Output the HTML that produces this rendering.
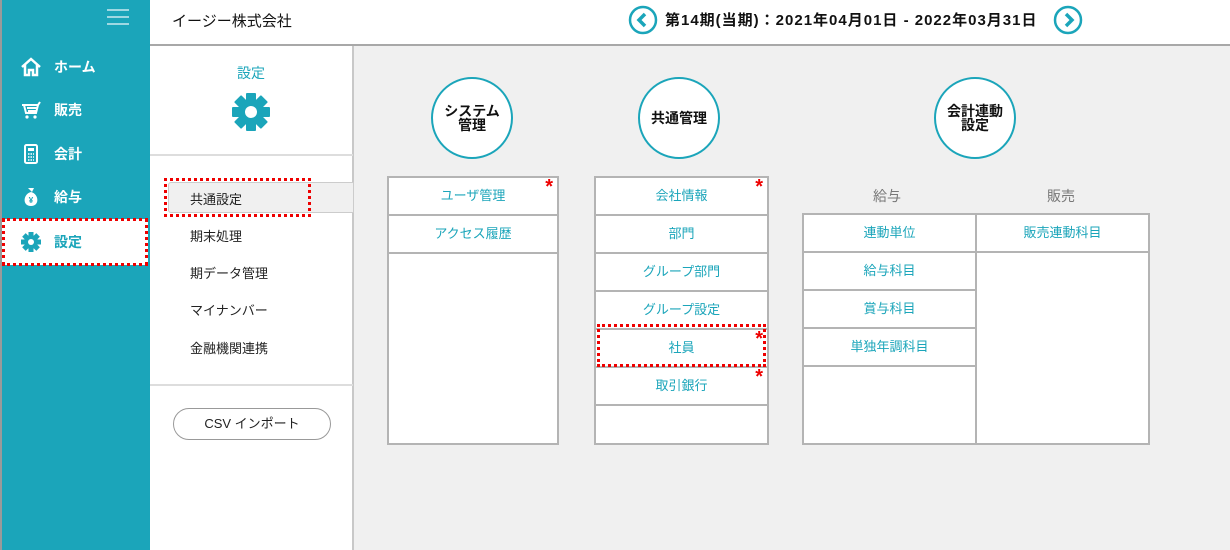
<!DOCTYPE html>
<html><head><meta charset="utf-8"><style>
*{margin:0;padding:0;box-sizing:border-box}
body{width:1230px;height:550px;position:relative;overflow:hidden;background:#f0f0f0;font-family:"Liberation Sans","Noto Sans CJK JP",sans-serif;font-size:13px;color:#222}
.a{position:absolute}
.side{left:0;top:0;width:150px;height:550px;background:#1ba5ba;border-left:2px solid #9a9a9a}
.nav{left:20px;color:#fff;font-weight:bold;font-size:14px;display:flex;align-items:center;gap:12px}
.hdr{left:150px;top:0;width:1080px;height:46px;background:#fff;border-bottom:2px solid #a8a8a8}
.mid{left:150px;top:46px;width:204px;height:504px;background:#fff;border-right:2px solid #c8c8c8}
.circ{width:82px;height:82px;border:2px solid #1ba5ba;border-radius:50%;background:#fff;display:flex;align-items:center;justify-content:center;text-align:center;font-weight:bold;font-size:14px;line-height:14px;color:#111}
.box{background:#fff;border:2px solid #b4b4b4}
.row{height:38px;border-bottom:2px solid #b4b4b4;color:#1ba5ba;text-align:center;line-height:36px;font-size:13px;position:relative}
.st{position:absolute;right:4px;top:-4px;color:#e00;font-size:20px;font-weight:bold;line-height:26px}
.red{border:3px dotted #e00}
.mi{left:190px;font-size:13px;color:#222}
</style></head><body>
<div class="a side"></div>
<div class="a" style="left:107px;top:9px;width:22px;height:2px;background:#9fd8e2;box-shadow:0 7px 0 #9fd8e2,0 14px 0 #9fd8e2"></div>
<div class="a nav" style="top:57px"><svg width="22" height="20" viewBox="0 0 22 20"><path d="M2 10 L11 2 L20 10 M5 8 V18 H9 V13 H13 V18 H17 V8" fill="none" stroke="#fff" stroke-width="2.5"/></svg>ホーム</div>
<div class="a nav" style="top:100px"><svg width="22" height="20" viewBox="0 0 22 20"><path d="M2 5 H18 L20 2 M4 5 L6 13 H16 L18 5 M7 8 H17 M8 11 H16" fill="none" stroke="#fff" stroke-width="2"/><circle cx="7" cy="17" r="1.6" fill="#fff"/><circle cx="15" cy="17" r="1.6" fill="#fff"/></svg>販売</div>
<div class="a nav" style="top:143px"><svg width="22" height="22" viewBox="0 0 22 22"><rect x="5" y="2" width="12" height="18" rx="1.5" fill="none" stroke="#fff" stroke-width="2"/><rect x="8" y="5" width="6" height="3" fill="#fff"/><path d="M8 11h6M8 14h6M8 17h6" stroke="#fff" stroke-width="1.5" stroke-dasharray="1.5 1"/></svg>会計</div>
<div class="a nav" style="top:186px"><svg width="22" height="22" viewBox="0 0 22 22"><path d="M8 2h6l-2 4 M11 6 C3 8 2 20 11 20 C20 20 19 8 11 6Z" fill="#fff"/><text x="11" y="17" font-size="8" text-anchor="middle" fill="#1ba5ba" font-weight="bold">¥</text></svg>給与</div>
<div class="a" style="left:2px;top:219px;width:146px;height:46px;background:#fff"></div>
<div class="a nav" style="top:231px;color:#1ba5ba"><svg width="22" height="22" viewBox="-11 -11 22 22"><g fill="#1ba5ba"><circle r="7"/><rect x="-2.5" y="-10" width="5" height="20"/><rect x="-2.5" y="-10" width="5" height="20" transform="rotate(45)"/><rect x="-2.5" y="-10" width="5" height="20" transform="rotate(90)"/><rect x="-2.5" y="-10" width="5" height="20" transform="rotate(135)"/></g><circle r="3" fill="#fff"/></svg>設定</div>
<div class="a red" style="left:2px;top:218px;width:146px;height:48px"></div>

<div class="a hdr"></div>
<div class="a" style="left:172px;top:10px;font-size:15px;color:#111">イージー株式会社</div>
<svg class="a" style="left:628px;top:5px" width="30" height="30"><circle cx="15" cy="15" r="13" fill="#fff" stroke="#1ba5ba" stroke-width="2.5"/><path d="M17 9 L11 15 L17 21" fill="none" stroke="#1ba5ba" stroke-width="3.5"/></svg>
<div class="a" style="left:665px;top:9px;font-size:15px;font-weight:bold;color:#111;letter-spacing:1px;white-space:nowrap">第14期(当期)：2021年04月01日 - 2022年03月31日</div>
<svg class="a" style="left:1053px;top:5px" width="30" height="30"><circle cx="15" cy="15" r="13" fill="#fff" stroke="#1ba5ba" stroke-width="2.5"/><path d="M13 9 L19 15 L13 21" fill="none" stroke="#1ba5ba" stroke-width="3.5"/></svg>

<div class="a mid"></div>
<div class="a" style="left:237px;top:63px;color:#1ba5ba;font-size:14px">設定</div>
<svg class="a" style="left:231px;top:92px" width="40" height="40" viewBox="-20 -20 40 40"><g fill="#1ba5ba"><circle r="13"/><rect x="-5" y="-19" width="10" height="38" rx="1"/><rect x="-5" y="-19" width="10" height="38" rx="1" transform="rotate(45)"/><rect x="-5" y="-19" width="10" height="38" rx="1" transform="rotate(90)"/><rect x="-5" y="-19" width="10" height="38" rx="1" transform="rotate(135)"/></g><circle r="6" fill="#fff"/></svg>
<div class="a" style="left:150px;top:154px;width:203px;height:2px;background:#ddd"></div>
<div class="a" style="left:168px;top:182px;width:186px;height:31px;background:#f0f0f0;border:1px solid #ccc;border-radius:3px 0 0 3px"></div>
<div class="a mi" style="left:190px;top:189px">共通設定</div>
<div class="a red" style="left:164px;top:178px;width:147px;height:39px"></div>
<div class="a mi" style="top:226px">期末処理</div>
<div class="a mi" style="top:263px">期データ管理</div>
<div class="a mi" style="top:300px">マイナンバー</div>
<div class="a mi" style="top:338px">金融機関連携</div>
<div class="a" style="left:150px;top:384px;width:203px;height:2px;background:#ddd"></div>
<div class="a" style="left:173px;top:408px;width:158px;height:32px;border:1px solid #999;border-radius:16px;background:#fff;text-align:center;line-height:30px;font-size:13px">CSV インポート</div>

<div class="a circ" style="left:431px;top:77px">システム<br>管理</div>
<div class="a circ" style="left:638px;top:77px">共通管理</div>
<div class="a circ" style="left:934px;top:77px">会計連動<br>設定</div>

<div class="a box" style="left:387px;top:176px;width:172px;height:269px">
<div class="row">ユーザ管理<span class="st">*</span></div>
<div class="row">アクセス履歴</div></div>
<div class="a box" style="left:594px;top:176px;width:175px;height:269px">
<div class="row">会社情報<span class="st">*</span></div>
<div class="row">部門</div>
<div class="row">グループ部門</div>
<div class="row">グループ設定</div>
<div class="row">社員<span class="st">*</span></div>
<div class="row">取引銀行<span class="st">*</span></div></div>
<div class="a red" style="left:597px;top:324px;width:169px;height:43px"></div>

<div class="a" style="left:873px;top:186px;color:#777;font-size:14px">給与</div>
<div class="a" style="left:1047px;top:186px;color:#777;font-size:14px">販売</div>
<div class="a box" style="left:802px;top:213px;width:175px;height:232px">
<div class="row">連動単位</div>
<div class="row">給与科目</div>
<div class="row">賞与科目</div>
<div class="row">単独年調科目</div></div>
<div class="a box" style="left:975px;top:213px;width:175px;height:232px">
<div class="row">販売連動科目</div></div>
</body></html>
